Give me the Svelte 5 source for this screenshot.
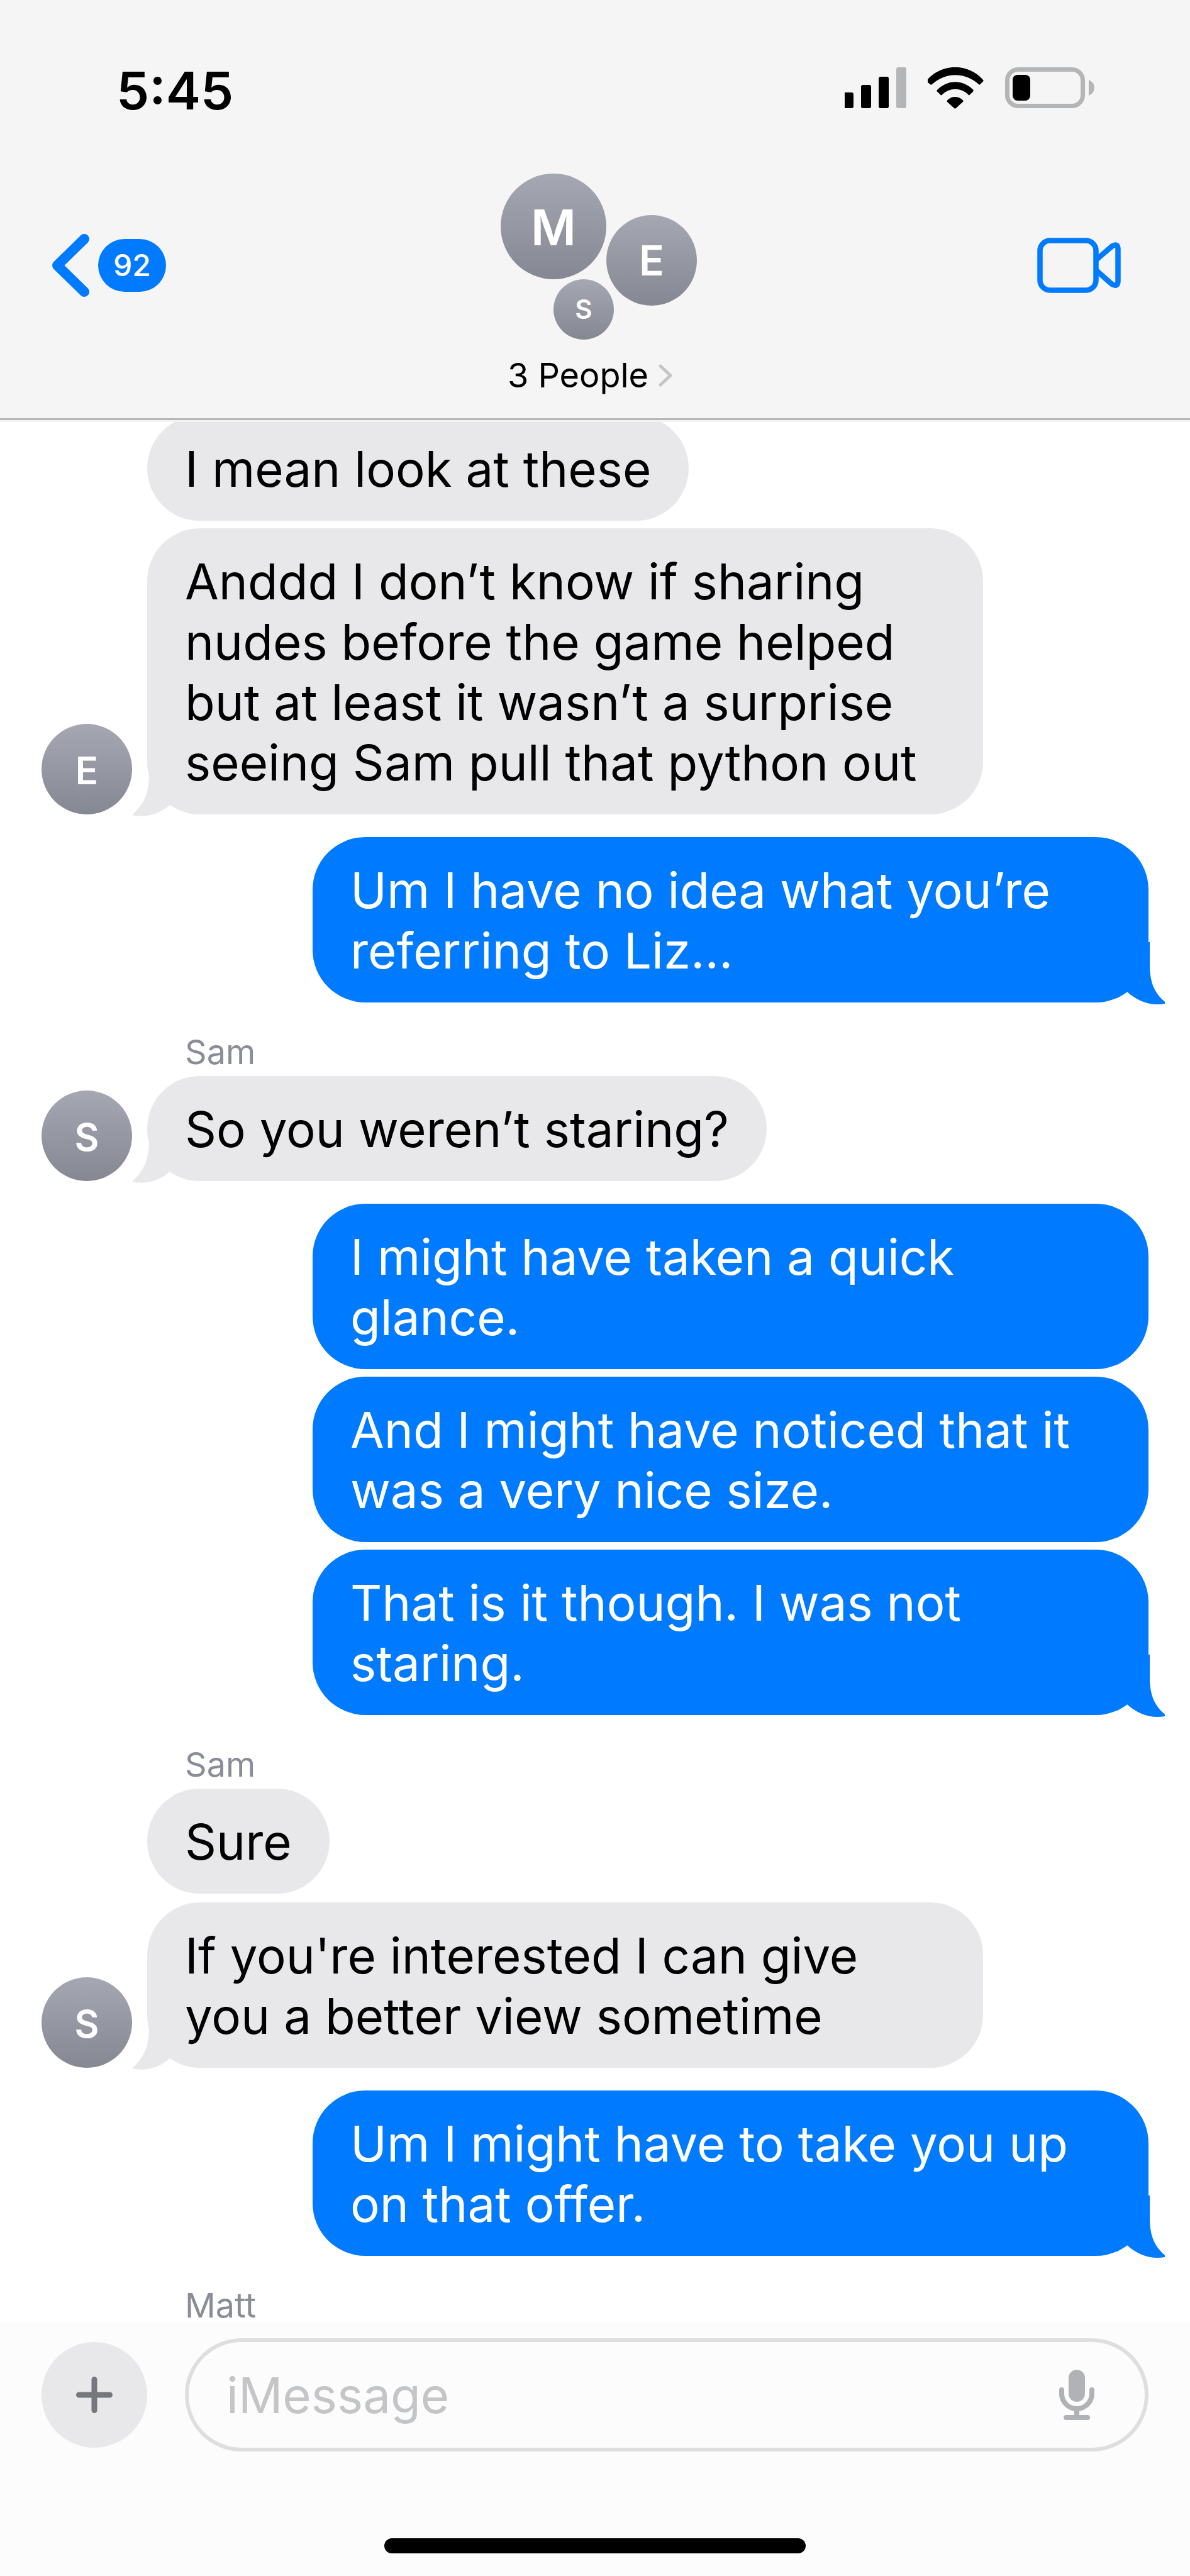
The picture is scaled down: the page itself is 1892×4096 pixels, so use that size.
<script>
  const people = [
    { initial: 'M', slot: 'first' },
    { initial: 'E', slot: 'second' },
    { initial: 'S', slot: 'third' }
  ];

  const groups = [
    {
      initial: 'E',
      messages: [
        'I mean look at these',
        'Anddd I don’t know if sharing nudes before the game helped but at least it wasn’t a surprise seeing Sam pull that python out'
      ]
    },
    { mine: true, messages: ['Um I have no idea what you’re referring to Liz...'] },
    { name: 'Sam', initial: 'S', messages: ['So you weren’t staring?'] },
    {
      mine: true,
      messages: [
        'I might have taken a quick glance.',
        'And I might have noticed that it was a very nice size.',
        'That is it though. I was not staring.'
      ]
    },
    {
      name: 'Sam',
      initial: 'S',
      messages: ['Sure', "If you're interested I can give you a better view sometime"]
    },
    { mine: true, messages: ['Um I might have to take you up on that offer.'] },
    { name: 'Matt', initial: 'M', messages: [] }
  ];

  let draft = $state('');
</script>

<div class="phone">
  <header>
    <div class="status">
      <time>5:45</time>
      <div class="indicators">
        <svg width="98" height="65" viewBox="0 0 98 65" role="img" aria-label="Signal">
          <path d="M0 40H11Q14 40 14 43V62Q14 65 11 65H0Z" />
          <rect x="26" y="28" width="16" height="37" rx="3" />
          <rect x="54" y="15" width="16" height="50" rx="3" />
          <rect x="82" y="0" width="16" height="65" rx="3" fill="#b4b5b7" />
        </svg>
        <svg width="89" height="66" viewBox="0 0 89 66" role="img" aria-label="Wi-Fi">
          <path d="M0 19A59 59 0 0 1 88 20Q89 21 88.500 22L83 27.500Q82 28 81 27A54 54 0 0 0 7 27Q5.500 28 4.500 27.500L0 24Z" />
          <path d="M15 36A39 39 0 0 1 72.500 36Q73 37 72.500 38L66.500 44Q65.500 45 64.500 43.500A29 29 0 0 0 23 43.500Q21.500 45 20.500 44L14.500 38Q14 37 15 36Z" />
          <path d="M31 52.500A17 17 0 0 1 56 52.500Q57 54 56 55L45 65Q43.500 66 42 65L31 55Q30 54 31 52.500Z" />
        </svg>
        <svg width="142" height="65" viewBox="0 0 142 65" role="img" aria-label="Battery">
          <rect x="3.500" y="3.500" width="120" height="58" rx="17" fill="none" stroke="#b4b5b7" stroke-width="7" />
          <rect x="12" y="12" width="28" height="41" rx="8" />
          <path d="M133 20Q142 24 142 32.500Q142 41 133 45Z" fill="#b4b5b7" />
        </svg>
      </div>
    </div>

    <nav>
      <button class="back" aria-label="Back, 92 unread">
        <svg width="59" height="100" viewBox="0 0 59 100" aria-hidden="true">
          <path d="M51 8L8 50L51 92" fill="none" stroke="#007aff" stroke-width="16" stroke-linecap="round" stroke-linejoin="round" />
        </svg>
        <span class="badge">92</span>
      </button>

      <button class="group-info">
        <span class="cluster">
          {#each people as person}
            <span class="avatar {person.slot}">{person.initial}</span>
          {/each}
        </span>
        <span class="title">
          3 People
          <svg width="22" height="36" viewBox="0 0 22 36" aria-hidden="true">
            <path d="M3 3L19 18L3 33" fill="none" stroke="#c4c5c7" stroke-width="5" stroke-linecap="round" stroke-linejoin="round" />
          </svg>
        </span>
      </button>

      <button class="video" aria-label="Video call">
        <svg width="133" height="88" viewBox="0 0 133 88" aria-hidden="true">
          <g fill="none" stroke="#007aff" stroke-width="8.500" stroke-linejoin="round">
            <rect x="4.500" y="4.500" width="89" height="79" rx="16" />
            <path d="M94 35L119 13.500Q128.500 8 128.500 18V69Q128.500 79 119 74L94 52" />
          </g>
        </svg>
      </button>
    </nav>
  </header>

  <main>
    {#each groups as group}
      <section class:mine={group.mine} class:named={group.name}>
        {#if group.name}
          <h2>{group.name}</h2>
        {/if}
        {#each group.messages as message, i}
          {@const last = i === group.messages.length - 1}
          <div class="row">
            {#if !group.mine}
              <div class="sender">
                {#if last}<span class="avatar">{group.initial}</span>{/if}
              </div>
            {/if}
            <p>
              {message}
              {#if last && group.mine}
                <svg class="tail" width="60" height="100" viewBox="0 0 60 100" aria-hidden="true">
                  <path d="M20 0H36V40C37 66 44 81 60 95V98C38 102 16 94 0 79V60Z" />
                </svg>
              {:else if last}
                <svg class="tail" width="80" height="82" viewBox="0 0 80 82" aria-hidden="true">
                  <path d="M24 0L27 16C26 45 20 60 0 79C22 84 42 78 60 63L80 40L60 0Z" />
                </svg>
              {/if}
            </p>
          </div>
        {/each}
      </section>
    {/each}
  </main>

  <footer>
    <div class="compose">
      <button class="add" aria-label="Add attachment">
        <svg width="58" height="58" viewBox="0 0 58 58" aria-hidden="true">
          <path d="M29 4.500V53.500M4.500 29H53.500" stroke="#76777c" stroke-width="9" stroke-linecap="round" />
        </svg>
      </button>
      <div class="field">
        <input type="text" placeholder="iMessage" aria-label="Message" bind:value={draft} />
        <button class="mic" aria-label="Dictate">
          <svg width="56" height="80" viewBox="0 0 56 80" aria-hidden="true">
            <rect x="15" y="0" width="26" height="51" rx="13" fill="#b1b2b5" />
            <path d="M4 32V38A24 24 0 0 0 52 38V32" fill="none" stroke="#b1b2b5" stroke-width="8" stroke-linecap="round" />
            <path d="M24 64H32V74H24Z" fill="#b1b2b5" />
            <rect x="7" y="72" width="42" height="8" rx="4" fill="#b1b2b5" />
          </svg>
        </button>
      </div>
    </div>
    <div class="home"></div>
  </footer>
</div>

<style>
  :global(body) {
    margin: 0;
  }

  .phone {
    display: flex;
    flex-direction: column;
    min-height: 100vh;
    background: #fff;
    color: #000;
    font-family: Inter, 'Liberation Sans', sans-serif;
  }

  button {
    margin: 0;
    padding: 0;
    border: 0;
    background: none;
    color: inherit;
    font: inherit;
  }

  svg {
    display: block;
    flex: none;
  }

  header {
    position: relative;
    z-index: 1;
    flex: none;
    background: #f5f5f5;
    border-bottom: 3px solid #b4b5b5;
    box-shadow: 0 3px 0 #f3f3f3;
  }

  .status {
    display: flex;
    align-items: center;
    justify-content: space-between;
    box-sizing: border-box;
    height: 276px;
    padding: 4px 152px 0 185px;
  }

  time {
    padding-top: 7px;
    font-size: 83px;
    font-weight: 600;
    line-height: 102px;
  }

  .indicators {
    display: flex;
    gap: 34px;
  }

  nav {
    display: grid;
    grid-template-columns: 1fr auto 1fr;
    align-items: start;
    padding: 0 110px 35px 83px;
  }

  .back,
  .video {
    display: flex;
    align-items: center;
    height: 292px;
  }

  .back {
    justify-self: start;
    gap: 14px;
  }

  .video {
    justify-self: end;
  }

  .badge {
    min-width: 108px;
    border-radius: 42px;
    background: #007aff;
    color: #fff;
    font-size: 48px;
    font-weight: 500;
    line-height: 84px;
    text-align: center;
  }

  .group-info {
    display: flex;
    flex-direction: column;
    align-items: center;
    gap: 24px;
    margin-left: 27px;
  }

  .cluster {
    display: grid;
    grid-template-columns: 84px 84px 12px 132px;
    grid-template-rows: 66px 102px 42px 54px;
    margin-left: 12px;
  }

  .title {
    display: flex;
    align-items: center;
    gap: 16px;
    margin-right: 16px;
    font-size: 54px;
    line-height: 66px;
  }

  .avatar {
    display: flex;
    align-items: center;
    justify-content: center;
    box-sizing: border-box;
    width: 144px;
    height: 144px;
    padding-top: 3px;
    border-radius: 50%;
    background: linear-gradient(#a5a8b2, #858892);
    color: #fff;
    font-size: 60px;
    font-weight: 600;
    line-height: 1;
  }

  .first {
    grid-area: 1 / 1 / 3 / 3;
    width: 168px;
    height: 168px;
    font-size: 78px;
  }

  .second {
    grid-area: 2 / 3 / 4 / 5;
    padding-top: 0;
    font-size: 66px;
  }

  .third {
    grid-area: 3 / 2 / 5 / 4;
    width: 96px;
    height: 96px;
    padding-top: 0;
    font-size: 42px;
  }

  main {
    display: flex;
    flex: 1;
    flex-direction: column;
    gap: 36px;
    padding: 0 66px;
  }

  section {
    display: flex;
    flex: none;
    flex-direction: column;
    gap: 12px;
    padding-right: 263px;
  }

  section:first-child {
    margin-top: -7px;
  }

  .named {
    gap: 14px;
    margin-top: -36px;
  }

  .mine {
    padding: 0 0 0 431px;
  }

  h2 {
    margin: 52px 0 -3px 228px;
    color: #8a8d97;
    font-size: 54px;
    font-weight: 400;
    line-height: 54px;
  }

  .row {
    display: flex;
    align-items: flex-end;
  }

  .mine .row {
    justify-content: flex-end;
  }

  .sender {
    flex: none;
    width: 168px;
  }

  p {
    position: relative;
    margin: 0;
    padding: 37px 60px 34px;
    border-radius: 84px;
    background: #e8e8ea;
    font-size: 78px;
    line-height: 96px;
  }

  .mine p {
    background: #007aff;
    color: #fff;
  }

  .tail {
    position: absolute;
    bottom: -4px;
    left: -24px;
    fill: #e8e8ea;
  }

  .mine .tail {
    right: -26px;
    left: auto;
    fill: #007aff;
  }

  footer {
    display: flex;
    flex: none;
    flex-direction: column;
    gap: 138px;
    padding: 25px 66px 36px;
    background: #fcfcfc;
  }

  .compose {
    display: flex;
    align-items: center;
    gap: 60px;
  }

  .add {
    display: flex;
    flex: none;
    align-items: center;
    justify-content: center;
    width: 168px;
    height: 168px;
    border-radius: 50%;
    background: #e8e8ea;
  }

  .field {
    display: flex;
    flex: 1;
    align-items: center;
    box-sizing: border-box;
    height: 180px;
    padding: 0 80px 0 60px;
    border: 6px solid #dedede;
    border-radius: 90px;
  }

  input {
    flex: 1;
    min-width: 0;
    height: 96px;
    padding: 0;
    border: 0;
    outline: 0;
    background: none;
    color: #000;
    font: inherit;
    font-size: 78px;
  }

  input::placeholder {
    color: #c4c5c7;
    opacity: 1;
  }

  .home {
    align-self: center;
    width: 36%;
    min-width: 670px;
    height: 24px;
    border-radius: 12px;
    background: #000;
  }
</style>
